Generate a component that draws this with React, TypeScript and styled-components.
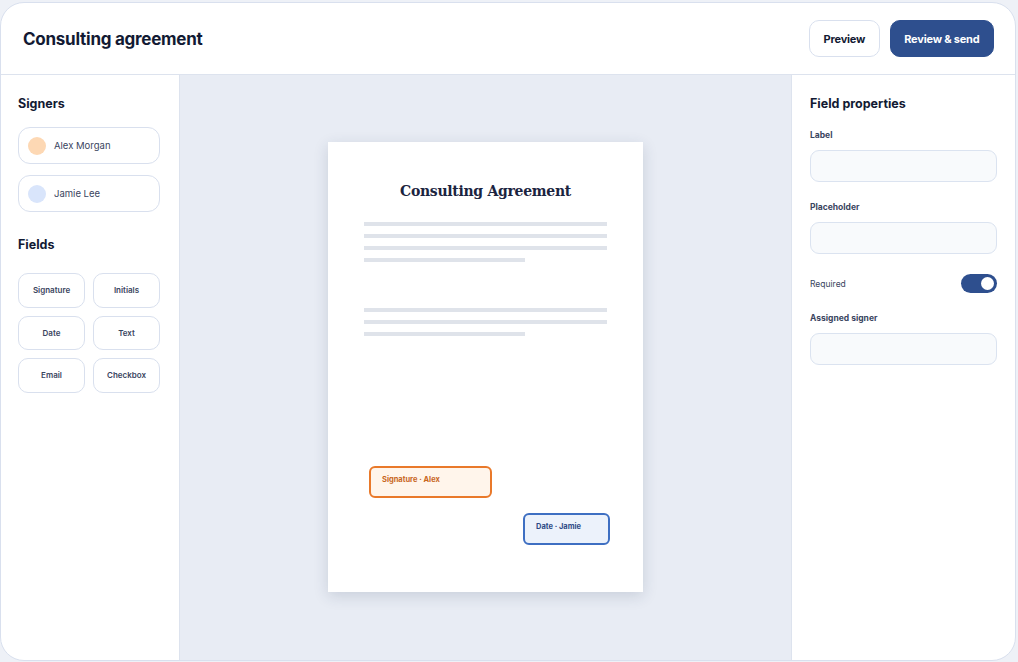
import React from "react";
import styled, { createGlobalStyle } from "styled-components";

const GlobalStyle = createGlobalStyle`
  html, body {
    margin: 0;
    padding: 0;
    background: #eef1f7;
    font-family: Inter, "Noto Sans", sans-serif;
    color: #121a33;
  }
`;

const Shell = styled.div`
  width: 1018px;
  height: 662px;
  box-sizing: border-box;
  padding: 2px 2px 1px 0;
`;

const Frame = styled.div`
  height: 100%;
  box-sizing: border-box;
  background: #fff;
  border: 1px solid #d9e0ee;
  border-radius: 24px;
  overflow: hidden;
  display: flex;
  flex-direction: column;
`;

const Header = styled.header`
  height: 72px;
  flex-shrink: 0;
  box-sizing: border-box;
  border-bottom: 1px solid #dde3ee;
  display: flex;
  align-items: center;
  justify-content: space-between;
  padding: 0 21px 0 22px;
`;

const Title = styled.h1`
  margin: 0;
  font-size: 17px;
  font-weight: 700;
  letter-spacing: -0.25px;
  color: #121a33;
`;

const Actions = styled.div`
  display: flex;
  gap: 10px;
`;

const Button = styled.button<{ $primary?: boolean }>`
  height: 37px;
  padding: 0 13.5px;
  border-radius: 10px;
  font-family: inherit;
  font-size: 11px;
  font-weight: 700;
  letter-spacing: -0.2px;
  border: 1px solid ${(p) => (p.$primary ? "#2e4f8e" : "#d9e0ee")};
  background: ${(p) => (p.$primary ? "#2e4f8e" : "#fff")};
  color: ${(p) => (p.$primary ? "#fff" : "#121a33")};
`;

const Body = styled.div`
  flex: 1;
  display: flex;
  min-height: 0;
`;

const Sidebar = styled.aside`
  width: 179px;
  flex-shrink: 0;
  box-sizing: border-box;
  border-right: 1px solid #dde3ee;
  padding: 21px 19px 0 17px;
  display: flex;
  flex-direction: column;
`;

const SectionTitle = styled.h2<{ $gap?: number }>`
  margin: 0 0 ${(p) => p.$gap ?? 16}px;
  font-size: 12.5px;
  font-weight: 700;
  color: #121a33;
`;

const SignerList = styled.div`
  display: flex;
  flex-direction: column;
  gap: 11px;
  margin-bottom: 25px;
`;

const SignerCard = styled.div`
  height: 37px;
  box-sizing: border-box;
  border: 1px solid #d9e0ee;
  border-radius: 12px;
  display: flex;
  align-items: center;
  gap: 8px;
  padding: 0 9px;
`;

const Avatar = styled.span<{ $color: string }>`
  width: 18px;
  height: 18px;
  border-radius: 50%;
  background: ${(p) => p.$color};
`;

const SignerName = styled.span`
  font-size: 9.5px;
  color: #3a4560;
`;

const FieldGrid = styled.div`
  display: grid;
  grid-template-columns: 1fr 1fr;
  column-gap: 8px;
  row-gap: 8px;
`;

const FieldChip = styled.div`
  height: 34.5px;
  box-sizing: border-box;
  border: 1px solid #d9e0ee;
  border-radius: 10px;
  display: flex;
  align-items: center;
  justify-content: center;
  font-size: 8px;
  font-weight: 600;
  color: #3a4560;
`;

const Canvas = styled.main`
  flex: 1;
  background: #e8ecf4;
  display: flex;
  justify-content: center;
  padding-top: 67px;
`;

const Page = styled.div`
  position: relative;
  width: 315px;
  height: 450px;
  box-sizing: border-box;
  background: #fff;
  box-shadow: 0 4px 14px rgba(40, 55, 90, 0.16);
  padding: 41px 36px 0 36px;
`;

const DocTitle = styled.h3`
  margin: 0 0 23px;
  text-align: center;
  font-family: "DejaVu Serif", "Liberation Serif", serif;
  font-size: 14px;
  font-weight: 700;
  letter-spacing: -0.3px;
  color: #1b2440;
`;

const Paragraph = styled.div`
  display: flex;
  flex-direction: column;
  gap: 8px;
  margin-bottom: 46px;
`;

const TextLine = styled.div<{ $short?: boolean }>`
  height: 4px;
  width: ${(p) => (p.$short ? "161px" : "243px")};
  background: #dfe3ea;
`;

const PlacedField = styled.div<{ $tone: "orange" | "blue" }>`
  position: absolute;
  box-sizing: border-box;
  height: 32px;
  border-radius: 6px;
  border: 2px solid ${(p) => (p.$tone === "orange" ? "#e9792a" : "#3e6fc2")};
  background: ${(p) => (p.$tone === "orange" ? "#fff5eb" : "#ecf2fb")};
  color: ${(p) => (p.$tone === "orange" ? "#c8661d" : "#2c4a86")};
  font-size: 7.5px;
  font-weight: 700;
  padding: 7px 11px;
`;

const Properties = styled.aside`
  width: 224px;
  flex-shrink: 0;
  box-sizing: border-box;
  border-left: 1px solid #dde3ee;
  padding: 21px 18px 0 18px;
  display: flex;
  flex-direction: column;
`;

const PropLabel = styled.div`
  font-size: 8.5px;
  font-weight: 700;
  color: #3a4560;
  margin-bottom: 10px;
`;

const Input = styled.div`
  height: 32px;
  box-sizing: border-box;
  border: 1px solid #dbe3f0;
  border-radius: 9px;
  background: #f8fafc;
  margin-bottom: 20px;
`;

const ToggleRow = styled.div`
  display: flex;
  align-items: center;
  justify-content: space-between;
  margin: 0 0 20px;
  font-size: 8.5px;
  color: #3a4560;
`;

const Toggle = styled.span`
  width: 36px;
  height: 19px;
  border-radius: 10px;
  background: #2e4f8e;
  display: flex;
  align-items: center;
  justify-content: flex-end;
  padding-right: 3px;
  box-sizing: border-box;
  &::after {
    content: "";
    width: 13px;
    height: 13px;
    border-radius: 50%;
    background: #fff;
  }
`;

const signers = [
  { name: "Alex Morgan", color: "#fdd8b4" },
  { name: "Jamie Lee", color: "#d9e5fb" },
];

const fieldTypes = ["Signature", "Initials", "Date", "Text", "Email", "Checkbox"];

const App = () => {
  return (
    <Shell>
      <GlobalStyle />
      <Frame>
        <Header>
          <Title>Consulting agreement</Title>
          <Actions>
            <Button>Preview</Button>
            <Button $primary>Review &amp; send</Button>
          </Actions>
        </Header>

        <Body>
          <Sidebar>
            <SectionTitle $gap={16}>Signers</SectionTitle>
            <SignerList>
              {signers.map((s) => (
                <SignerCard key={s.name}>
                  <Avatar $color={s.color} />
                  <SignerName>{s.name}</SignerName>
                </SignerCard>
              ))}
            </SignerList>

            <SectionTitle $gap={21}>Fields</SectionTitle>
            <FieldGrid>
              {fieldTypes.map((f) => (
                <FieldChip key={f}>{f}</FieldChip>
              ))}
            </FieldGrid>
          </Sidebar>

          <Canvas>
            <Page>
              <DocTitle>Consulting Agreement</DocTitle>
              <Paragraph>
                <TextLine />
                <TextLine />
                <TextLine />
                <TextLine $short />
              </Paragraph>
              <Paragraph>
                <TextLine />
                <TextLine />
                <TextLine $short />
              </Paragraph>

              <PlacedField $tone="orange" style={{ left: 41, top: 324, width: 123 }}>
                Signature · Alex
              </PlacedField>
              <PlacedField $tone="blue" style={{ left: 195, top: 371, width: 87 }}>
                Date · Jamie
              </PlacedField>
            </Page>
          </Canvas>

          <Properties>
            <SectionTitle $gap={19}>Field properties</SectionTitle>
            <PropLabel>Label</PropLabel>
            <Input />
            <PropLabel>Placeholder</PropLabel>
            <Input />
            <ToggleRow>
              Required
              <Toggle />
            </ToggleRow>
            <PropLabel>Assigned signer</PropLabel>
            <Input />
          </Properties>
        </Body>
      </Frame>
    </Shell>
  );
};

export default App;
